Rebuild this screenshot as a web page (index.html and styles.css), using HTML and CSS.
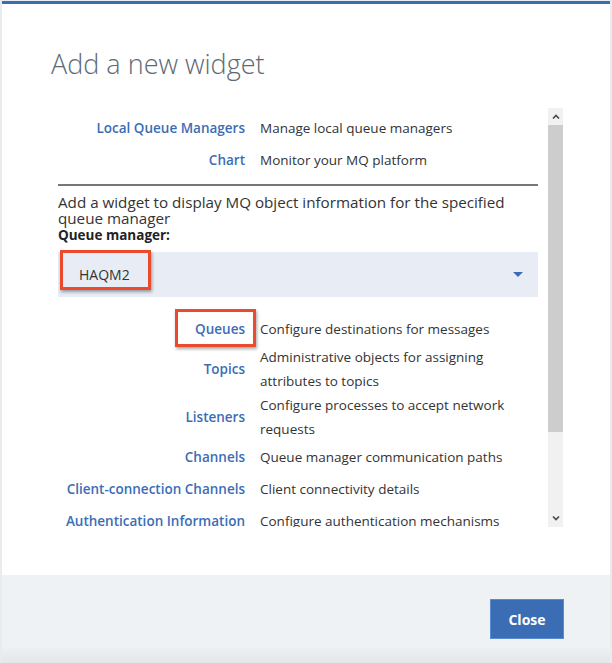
FILE: index.html
```html
<!DOCTYPE html>
<html lang="en">
<head>
<meta charset="utf-8">
<title>Add a new widget</title>
<link rel="stylesheet" href="styles.css">
</head>
<body>
<div class="dialog">
  <div class="header">
    <h1 class="title">Add a new widget</h1>
  </div>
  <div class="main">
    <div class="scroll">
      <div class="content">
        <div class="rows">
          <div class="label">Local Queue Managers</div>
          <div class="desc">Manage local queue managers</div>
          <div class="label">Chart</div>
          <div class="desc">Monitor your MQ platform</div>
        </div>
        <div class="divider"></div>
        <p class="intro">Add a widget to display MQ object information for the specified queue manager</p>
        <div class="qm-label">Queue manager:</div>
        <div class="select">
          <span class="select-value">HAQM2</span>
          <svg class="caret" width="10" height="6" viewBox="0 0 10 6"><path d="M0 0 L10 0 L5 5 Z" fill="#3b6db5"/></svg>
          <span class="mark mark-select"></span>
        </div>
        <div class="rows rows-objects">
          <div class="label"><span class="marked">Queues<span class="mark mark-queues"></span></span></div>
          <div class="desc">Configure destinations for messages</div>
          <div class="label">Topics</div>
          <div class="desc">Administrative objects for assigning attributes to topics</div>
          <div class="label">Listeners</div>
          <div class="desc">Configure processes to accept network requests</div>
          <div class="label">Channels</div>
          <div class="desc">Queue manager communication paths</div>
          <div class="label">Client-connection Channels</div>
          <div class="desc">Client connectivity details</div>
          <div class="label">Authentication Information</div>
          <div class="desc">Configure authentication mechanisms</div>
        </div>
      </div>
      <div class="scrollbar">
        <div class="sb-btn"><svg width="8" height="5" viewBox="0 0 8 5"><path d="M1 4.5 L4 1.5 L7 4.5" fill="none" stroke="#4a4a4a" stroke-width="1.6"/></svg></div>
        <div class="sb-thumb"></div>
        <div class="sb-track"></div>
        <div class="sb-btn"><svg width="8" height="5" viewBox="0 0 8 5"><path d="M1 0.5 L4 3.5 L7 0.5" fill="none" stroke="#4a4a4a" stroke-width="1.6"/></svg></div>
      </div>
    </div>
  </div>
  <div class="footer">
    <button class="btn-close">Close</button>
  </div>
</div>
</body>
</html>
```

FILE: styles.css
```css
html, body {
  margin: 0;
  height: 100%;
}
body {
  background: #e9ecef;
  padding: 1px 2px 0 2px;
  box-sizing: border-box;
  font-family: "Open Sans", "Liberation Sans", sans-serif;
  color: #333;
}
.dialog {
  height: 662px;
  background: #fff;
  border-top: 3px solid #3b6db5;
  box-sizing: border-box;
  display: flex;
  flex-direction: column;
}
.header {
  padding: 42px 0 0 49px;
}
.title {
  margin: 0;
  font-weight: 300;
  font-size: 27px;
  line-height: 36px;
  color: #5d6a74;
}
.main {
  flex: 1;
  padding: 26px 0 0 56px;
}
.scroll {
  display: flex;
  gap: 10px;
  width: 505px;
  height: 419px;
}
.content {
  width: 480px;
  overflow: hidden;
  padding-top: 4px;
  box-sizing: border-box;
}
.rows {
  display: grid;
  grid-template-columns: 187px 1fr;
  column-gap: 15px;
  font-size: 13.5px;
  line-height: 24px;
}
.rows > div {
  min-height: 32px;
  display: flex;
  align-items: center;
}
.label {
  justify-content: flex-end;
  text-align: right;
  color: #3b6db5;
  font-weight: 600;
  white-space: nowrap;
}
.desc {
  color: #333;
  padding-right: 30px;
}
.divider {
  height: 2px;
  background: #777;
  margin-top: 8px;
}
.intro {
  margin: 8px 0 0 0;
  font-size: 15.2px;
  line-height: 16px;
  color: #333;
}
.qm-label {
  margin-top: 1px;
  font-size: 13.5px;
  font-weight: 700;
  line-height: 16px;
  color: #222;
}
.select {
  position: relative;
  margin-top: 9px;
  height: 45px;
  background: #e8edf5;
  display: flex;
  align-items: center;
  justify-content: space-between;
  padding: 0 15px 0 21px;
}
.select-value {
  font-size: 14px;
  color: #333;
}
.caret {
  display: block;
}
.rows-objects {
  margin-top: 16px;
}
.marked {
  position: relative;
}
.mark {
  position: absolute;
  border: 3px solid #ea4b2c;
  box-shadow: 1px 2px 3px rgba(0,0,0,0.35);
  box-sizing: border-box;
}
.mark-select {
  left: 2px;
  top: -2px;
  width: 91px;
  height: 40px;
}
.mark-queues {
  left: -20px;
  top: -8px;
  width: 81px;
  height: 38px;
}
.scrollbar {
  width: 15px;
  display: flex;
  flex-direction: column;
  background: #f1f1f1;
}
.sb-btn {
  height: 17px;
  display: flex;
  align-items: center;
  justify-content: center;
}
.sb-thumb {
  height: 307px;
  background: #cdcdcd;
}
.sb-track {
  flex: 1;
}
.footer {
  height: 88px;
  background: linear-gradient(to bottom, #eef2f5 0%, #eef2f5 80%, #e4e7ea 100%);
  display: flex;
  justify-content: flex-end;
  align-items: flex-start;
  padding: 24px 46px 0 0;
  box-sizing: border-box;
}
.btn-close {
  width: 74px;
  height: 40px;
  background: #3b6db5;
  border: 1px solid #5b8cd3;
  color: #fff;
  font-family: "Open Sans", "Liberation Sans", sans-serif;
  font-weight: 700;
  font-size: 14px;
  padding: 0;
}
```
